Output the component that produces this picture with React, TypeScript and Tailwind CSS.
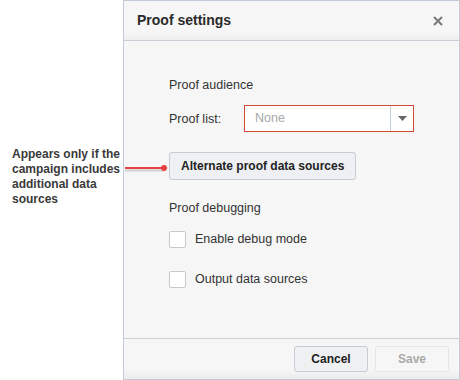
import React from "react";

export default function App() {
  return (
    <div
      className="relative flex h-[380px] w-[460px] bg-white text-[#333]"
      style={{ fontFamily: '"Liberation Sans", Arial, sans-serif' }}
    >
      {/* Annotation column */}
      <div className="w-[123px] shrink-0 pl-[12px] pt-[147px]">
        <p className="text-[12px] font-bold leading-[15px] text-[#3a3a3a]">
          Appears only if the campaign includes additional data sources
        </p>
      </div>

      {/* Dialog */}
      <div className="flex h-[380px] w-[337px] flex-col border border-[#c3ccd6] bg-[#f6f6f6]">
        <div className="flex h-[40px] shrink-0 items-center justify-between border-b border-[#c9d0d8] bg-gradient-to-b from-[#f6f6f6] from-80% to-[#eeeeee] pl-[13px] pr-[16px]">
          <h1 className="text-[14px] font-bold text-[#2a2a2a]">Proof settings</h1>
          <svg width="10" height="10" viewBox="0 0 10 10">
            <path d="M1 1 L9 9 M9 1 L1 9" stroke="#7a7a7a" strokeWidth="2" />
          </svg>
        </div>

        <div className="flex flex-1 flex-col pl-[45px]">
          <div className="mt-[36px] text-[12.5px] leading-[16px]">Proof audience</div>
          <div className="mt-[12px] flex items-center">
            <span className="w-[75px] text-[12.5px] leading-[16px]">Proof list:</span>
            <div className="flex h-[27px] w-[170px] items-stretch border border-[#d24a35] bg-white">
              <span className="flex flex-1 items-center pl-[10px] text-[12.5px] text-[#a8a8a8]">None</span>
              <span className="flex w-[23px] items-center justify-center border-l border-[#c5cfda]">
                <svg width="9" height="5" viewBox="0 0 9 5">
                  <path d="M0 0 H9 L4.5 5 Z" fill="#666" />
                </svg>
              </span>
            </div>
          </div>
          <div className="mt-[20px]">
            <button className="h-[28px] rounded-[3px] border border-[#c5ccd4] bg-[#eef0f3] px-[11px] text-[12px] font-bold text-[#222]">
              Alternate proof data sources
            </button>
          </div>
          <div className="mt-[20px] text-[12.5px] leading-[16px]">Proof debugging</div>
          <label className="mt-[14px] flex items-center">
            <span className="h-[17px] w-[17px] rounded-[2px] border border-[#c8c8c8] bg-white" />
            <span className="ml-[9px] text-[12.5px]">Enable debug mode</span>
          </label>
          <label className="mt-[21px] flex items-center">
            <span className="h-[17px] w-[17px] rounded-[2px] border border-[#c8c8c8] bg-white" />
            <span className="ml-[9px] text-[12.5px]">Output data sources</span>
          </label>
        </div>

        <div className="flex h-[41px] shrink-0 items-start justify-end gap-[7px] border-t border-[#c9d0d8] bg-gradient-to-b from-[#f6f6f6] from-75% to-[#ececec] pr-[10px] pt-[7px]">
          <button className="h-[26px] w-[74px] rounded-[3px] border border-[#c5ccd4] bg-[#eef0f2] text-[12px] font-bold text-[#222]">
            Cancel
          </button>
          <button className="h-[26px] w-[74px] rounded-[3px] border border-[#e6e6e6] bg-[#f6f6f6] text-[12px] font-bold text-[#a9a9a9]">
            Save
          </button>
        </div>
      </div>

      {/* Arrow pointer */}
      <svg className="absolute left-[124px] top-[163px]" width="46" height="12" viewBox="0 0 46 12">
        <line x1="1" y1="7.5" x2="40" y2="7.5" stroke="#b8b8b8" strokeWidth="2" opacity="0.6" />
        <line x1="1" y1="5" x2="40" y2="5" stroke="#e8403f" strokeWidth="2" />
        <circle cx="40" cy="5" r="3" fill="#e8403f" />
      </svg>
    </div>
  );
}
